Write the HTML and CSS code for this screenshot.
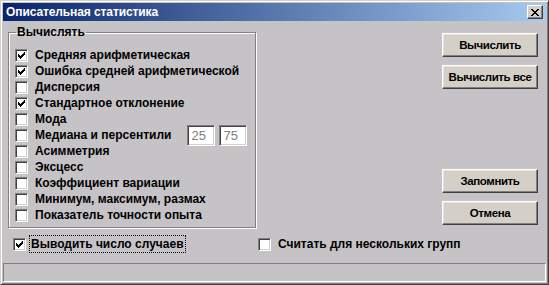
FILE: index.html
```html
<!DOCTYPE html>
<html lang="ru">
<head>
<meta charset="utf-8">
<title>Описательная статистика</title>
<link rel="stylesheet" href="styles.css">
</head>
<body>
<div class="window">
  <div class="titlebar">
    <span class="title">Описательная статистика</span>
    <span class="close">
      <svg width="8" height="7" viewBox="0 0 8 7"><path d="M0 0h2v1h1v1h2v-1h1v-1h2v1h-1v1h-1v1h-1v1h1v1h1v1h1v1h-2v-1h-1v-1h-2v1h-1v1h-2v-1h1v-1h1v-1h1v-1h-1v-1h-1v-1h-1z" fill="#000"/></svg>
    </span>
  </div>
  <div class="body">
    <div class="main">
      <fieldset class="group">
        <legend>Вычислять</legend>
        <div class="row"><span class="cb checked"></span><span>Средняя арифметическая</span></div>
        <div class="row"><span class="cb checked"></span><span>Ошибка средней арифметической</span></div>
        <div class="row"><span class="cb"></span><span>Дисперсия</span></div>
        <div class="row"><span class="cb checked"></span><span>Стандартное отклонение</span></div>
        <div class="row"><span class="cb"></span><span>Мода</span></div>
        <div class="row"><span class="cb"></span><span class="median">Медиана и персентили</span><span class="edit">25</span><span class="edit">75</span></div>
        <div class="row"><span class="cb"></span><span>Асимметрия</span></div>
        <div class="row"><span class="cb"></span><span>Эксцесс</span></div>
        <div class="row"><span class="cb"></span><span>Коэффициент вариации</span></div>
        <div class="row"><span class="cb"></span><span>Минимум, максимум, размах</span></div>
        <div class="row"><span class="cb"></span><span>Показатель точности опыта</span></div>
      </fieldset>
      <div class="buttons">
        <div class="btn-group">
          <button class="btn">Вычислить</button>
          <button class="btn">Вычислить все</button>
        </div>
        <div class="btn-group">
          <button class="btn">Запомнить</button>
          <button class="btn">Отмена</button>
        </div>
      </div>
    </div>
    <div class="options">
      <div class="opt first"><span class="cb checked"></span><span class="focus">Выводить число случаев</span></div>
      <div class="opt second"><span class="cb"></span><span>Считать для нескольких групп</span></div>
    </div>
  </div>
  <div class="status"></div>
</div>
</body>
</html>
```

FILE: styles.css
```css
* { box-sizing: border-box; }
html, body { margin: 0; padding: 0; }
body {
  width: 549px;
  height: 285px;
  overflow: hidden;
  background: #c6c3c6;
  font-family: "Liberation Sans", Arial, sans-serif;
  font-size: 11px;
  font-weight: bold;
  color: #000;
}
.window {
  width: 549px;
  height: 285px;
  background: #c6c3c6;
  border: 1px solid;
  border-color: #d4d0c8 #404040 #404040 #d4d0c8;
  box-shadow: inset 1px 1px 0 #fff, inset -1px -1px 0 #808080;
  padding: 2px;
  display: flex;
  flex-direction: column;
}
.titlebar {
  height: 18px;
  background: linear-gradient(to right, #0a246a, #a6caf0);
  display: flex;
  align-items: center;
  padding: 0 2px 0 3px;
  color: #fff;
  font-size: 12px;
}
.title { flex: 1; letter-spacing: -0.1px; }
.close {
  width: 16px;
  height: 14px;
  background: #d4d0c8;
  border: 1px solid;
  border-color: #fff #404040 #404040 #fff;
  box-shadow: inset -1px -1px 0 #808080;
  display: flex;
  align-items: center;
  justify-content: center;
  margin-right: 1px;
}
.body {
  flex: 1;
  display: flex;
  flex-direction: column;
  padding: 0 8px 0 5px;
}
.main {
  display: flex;
  justify-content: space-between;
}
.group {
  margin: 5px 0 0 0;
  width: 248px;
  height: 202px;
  padding: 9px 0 0 6px;
  border: 1px solid #808080;
  box-shadow: 1px 1px 0 #fff, inset 1px 1px 0 #fff;
}
.group legend {
  padding: 0 1px;
  margin-left: 1px;
  font-size: 12px;
  line-height: 12px;
}
.row {
  height: 16px;
  display: flex;
  align-items: center;
  gap: 7px;
  font-size: 12px;
  white-space: nowrap;
}
.cb {
  width: 13px;
  height: 13px;
  flex: none;
  background: #fff;
  border: 1px solid;
  border-color: #808080 #fff #fff #808080;
  box-shadow: inset 1px 1px 0 #404040, inset -1px -1px 0 #d4d0c8;
  position: relative;
}
.cb.checked::after {
  content: "";
  position: absolute;
  left: 2px;
  top: 2px;
  width: 7px;
  height: 7px;
  background: no-repeat center/7px 7px url("data:image/svg+xml;utf8,<svg xmlns='http://www.w3.org/2000/svg' width='7' height='7' viewBox='0 0 7 7'><path d='M6 0h1v3h-1v1h-1v1h-1v1h-1v1h-1v-1h-1v-1h-1v-3h1v1h1v1h1v-1h1v-1h1z' fill='black'/></svg>");
}
.median { margin-right: 9px; }
.edit {
  width: 28px;
  height: 21px;
  margin-right: -3px;
  background: #fff;
  border: 1px solid;
  border-color: #808080 #fff #fff #808080;
  box-shadow: inset 1px 1px 0 #404040, inset -1px -1px 0 #d4d0c8;
  color: #808080;
  font-weight: normal;
  font-size: 13px;
  padding: 2px 0 0 3px;
  line-height: 15px;
}
.buttons {
  margin-top: 12px;
  width: 96px;
  display: flex;
  flex-direction: column;
  gap: 80px;
}
.btn-group { display: flex; flex-direction: column; gap: 8px; }
.btn {
  width: 96px;
  height: 24px;
  background: #d4d0c8;
  border: 1px solid;
  border-color: #fff #404040 #404040 #fff;
  box-shadow: inset -1px -1px 0 #808080, inset 1px 1px 0 #e6e3de;
  font: inherit;
  font-size: 11.5px;
  letter-spacing: -0.4px;
  color: #000;
  padding: 0;
  white-space: nowrap;
}
.options {
  margin-top: 7px;
  display: flex;
  height: 18px;
  align-items: center;
}
.opt { display: flex; align-items: center; gap: 4px; font-size: 12px; white-space: nowrap; }
.opt.first { width: 250px; padding-left: 5px; }
.focus { outline: 1px dotted #000; padding: 1px 1px; }
.opt.second { gap: 7px; }
.status {
  height: 19px;
  border: 1px solid;
  border-color: #808080 #fff #fff #808080;
}
```
